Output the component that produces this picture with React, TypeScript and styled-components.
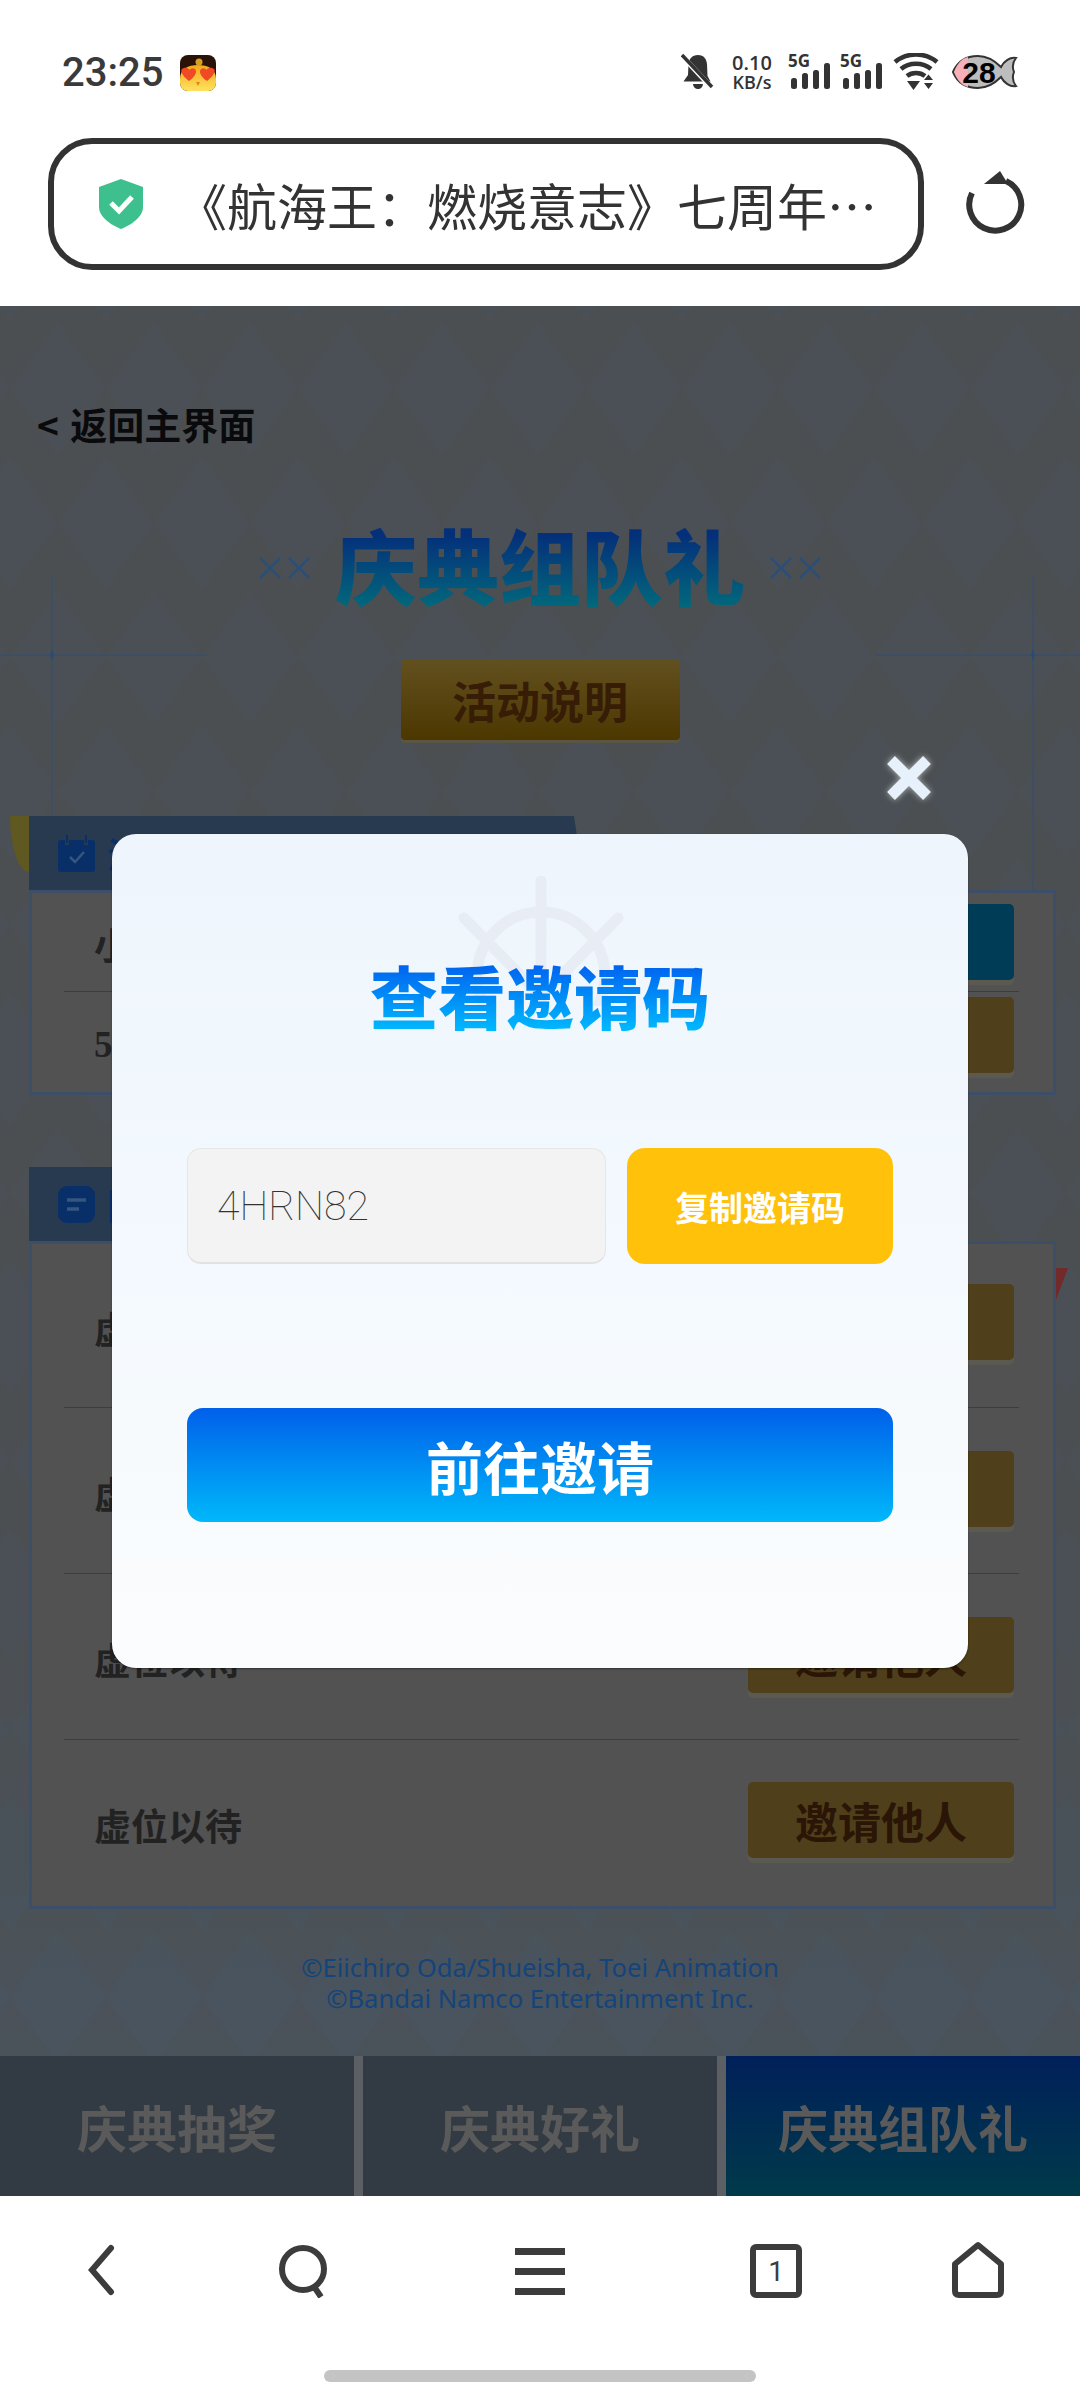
import React from 'react'
import styled, { createGlobalStyle } from 'styled-components'

const serif = `"Liberation Serif", "Noto Sans CJK SC", serif`
const sans = `"Noto Sans CJK SC", "Noto Sans", sans-serif`

const GlobalStyle = createGlobalStyle`
  html, body {
    margin: 0;
    padding: 0;
    background: #fff;
  }
  * {
    box-sizing: border-box;
  }
`

const Screen = styled.div`
  position: relative;
  width: 1080px;
  height: 2400px;
  display: flex;
  flex-direction: column;
  overflow: hidden;
  background: #fff;
  font-family: ${sans};
`

const StatusBar = styled.div`
  height: 106px;
  padding: 52px 62px 0 62px;
  display: flex;
  align-items: flex-start;
  justify-content: space-between;
`

const StatusLeft = styled.div`
  display: flex;
  align-items: center;
  gap: 17px;
`

const Clock = styled.span`
  font-family: Roboto, sans-serif;
  font-size: 40px;
  line-height: 42px;
  font-weight: 500;
  color: #3a3a3a;
`

const StatusRight = styled.div`
  display: flex;
  align-items: center;
  height: 40px;
`

const Speed = styled.div`
  width: 48px;
  margin: 0 12px 0 13px;
  text-align: center;
  font-family: "Open Sans", sans-serif;
  font-size: 18px;
  line-height: 19px;
  font-weight: 600;
  color: #333;
  white-space: nowrap;
`

const SpeedValue = styled.span`
  font-size: 20px;
`

const AddressRow = styled.div`
  height: 200px;
  padding: 32px 54px 0 48px;
  display: flex;
  align-items: flex-start;
  justify-content: space-between;
`

const AddressBar = styled.div`
  width: 876px;
  height: 132px;
  border: 6px solid #333;
  border-radius: 44px;
  padding-left: 43px;
  display: flex;
  align-items: center;
  gap: 44px;
`

const AddressText = styled.span`
  font-size: 50px;
  line-height: 60px;
  color: #333;
  white-space: nowrap;
  margin-left: -12px;
`

const Page = styled.div`
  position: relative;
  flex: 1;
  display: flex;
  flex-direction: column;
  overflow: hidden;
  background: linear-gradient(#4b4f52 0, #4b4f52 1300px, #4a535c 1890px);
`

const Backdrop = styled.svg`
  position: absolute;
  top: 0;
  left: 0;
`

const BackLink = styled.div`
  position: relative;
  margin: 97px 0 0 37px;
  font-size: 37px;
  line-height: 42px;
  font-weight: 700;
  word-spacing: 3px;
  color: #0a0a0c;
`

const TitleRow = styled.div`
  position: relative;
  margin-top: 75px;
  display: flex;
  align-items: center;
  justify-content: center;
  gap: 24px;
`

const Title = styled.h1`
  margin: 0;
  font-family: ${serif};
  font-size: 82px;
  line-height: 104px;
  font-weight: 900;
  background: linear-gradient(#04307a 15%, #02697c 85%);
  -webkit-background-clip: text;
  background-clip: text;
  color: transparent;
`

const ExplainButton = styled.div`
  position: relative;
  align-self: center;
  width: 279px;
  height: 80px;
  margin-top: 36px;
  border-radius: 4px;
  display: flex;
  align-items: center;
  justify-content: center;
  font-family: ${serif};
  font-size: 44px;
  font-weight: 700;
  color: #371c06;
  background: linear-gradient(#62501f, #4c3700);
  box-shadow: 0 3px 0 #5a5643;
`

const Section = styled.section<{ $top: number }>`
  position: relative;
  width: 1027px;
  margin: ${(p) => p.$top}px 0 0 29px;
`

const SectionHeader = styled.div`
  width: 556px;
  height: 74px;
  padding-left: 29px;
  display: flex;
  align-items: center;
  gap: 12px;
  background: #283a4f;
  clip-path: polygon(0 0, 545px 0, 100% 100%, 0 100%);
  font-family: ${serif};
  font-size: 36px;
  font-weight: 700;
  color: #082f68;
`

const SectionPanel = styled.div`
  border: 3px solid #3c4e68;
  background: #525252;
  padding: 0 34px 0 32px;
`

const Row = styled.div<{ $height: number; $last?: boolean }>`
  height: ${(p) => p.$height}px;
  padding: 0 5px 0 30px;
  display: flex;
  align-items: center;
  justify-content: space-between;
  border-bottom: ${(p) => (p.$last ? 'none' : '1px solid #3d3d3d')};
`

const RowLabel = styled.span`
  margin-top: 4px;
  font-family: ${serif};
  font-size: 37px;
  font-weight: 700;
  color: #222;
`

const RowButton = styled.div<{ $color?: string; $lift?: number }>`
  width: 266px;
  height: 76px;
  margin-top: ${(p) => -(p.$lift ?? 4)}px;
  border-radius: 5px;
  display: flex;
  align-items: center;
  justify-content: center;
  font-family: ${serif};
  font-size: 43px;
  font-weight: 700;
  color: #2a1506;
  background: ${(p) => p.$color || '#4f3f1a'};
  box-shadow: 0 5px 0 #5c5950;
`

const Ribbon = styled.div<{ $side: 'left' | 'right' }>`
  position: absolute;
  ${(p) =>
    p.$side === 'left'
      ? `left: -19px; top: 0; width: 19px; height: 56px; background: #5f5820; border-radius: 0 0 0 100%;`
      : `right: -12px; top: 101px; width: 12px; height: 32px; background: #732a2a; clip-path: polygon(0 0, 100% 0, 0 100%);`}
`

const Copyright = styled.div`
  position: relative;
  margin-top: 43px;
  text-align: center;
  font-family: "Noto Sans", sans-serif;
  font-size: 25.600px;
  line-height: 31px;
  color: #14447a;
`

const Tabs = styled.div`
  position: relative;
  margin-top: auto;
  height: 140px;
  display: grid;
  grid-template-columns: 354px 354px 354px;
  column-gap: 9px;
  background: #5c6064;
`

const Tab = styled.div<{ $active?: boolean }>`
  display: flex;
  align-items: center;
  justify-content: center;
  font-family: ${serif};
  font-size: 50px;
  font-weight: 700;
  color: #5a5a5a;
  background: ${(p) => (p.$active ? 'linear-gradient(#00205a, #003a4a)' : '#323a43')};
`

const BottomNav = styled.nav`
  height: 204px;
  padding-top: 48px;
  display: grid;
  grid-template-columns: 204px 200px 272px 200px 204px;
  justify-items: center;
  align-items: start;
  position: relative;
`

const HomeBar = styled.div`
  position: absolute;
  left: 324px;
  bottom: 18px;
  width: 432px;
  height: 12px;
  border-radius: 6px;
  background: #c4c4c4;
`

const ModalLayer = styled.div`
  position: absolute;
  top: 834px;
  left: 112px;
`

const Modal = styled.div`
  position: relative;
  width: 856px;
  height: 834px;
  padding: 129px 75px 0;
  border-radius: 24px;
  background: linear-gradient(#eef5fc, #f3f9fe 50%, #fbfcfd);
  box-shadow: 0 1px 2px rgba(0, 0, 0, 0.4);
`

const CloseButton = styled.svg`
  position: absolute;
  top: -80px;
  right: 35px;
  filter: drop-shadow(0 0 3px rgba(255, 255, 255, 0.6));
`

const Wheel = styled.svg`
  position: absolute;
  top: 42px;
  left: 344px;
`

const ModalTitle = styled.h2`
  position: relative;
  margin: 0;
  text-align: center;
  font-family: ${serif};
  font-size: 68px;
  line-height: 76px;
  font-weight: 900;
  background: linear-gradient(#0060ef, #00c4ff);
  -webkit-background-clip: text;
  background-clip: text;
  color: transparent;
`

const CodeRow = styled.div`
  position: relative;
  margin-top: 109px;
  display: flex;
  justify-content: space-between;
`

const CodeBox = styled.div`
  width: 419px;
  height: 116px;
  padding-left: 29px;
  display: flex;
  align-items: center;
  border-radius: 14px;
  background: #f3f3f3;
  border: 1px solid #e6e6e6;
  border-bottom: 2px solid #e2e2e2;
  font-family: Roboto, sans-serif;
  font-size: 41px;
  font-weight: 100;
  color: #333;
`

const CopyButton = styled.div`
  width: 266px;
  height: 116px;
  border-radius: 18px;
  display: flex;
  align-items: center;
  justify-content: center;
  font-family: ${serif};
  font-size: 34px;
  font-weight: 700;
  color: #fff;
  background: #ffc10a;
`

const GoButton = styled.div`
  position: relative;
  margin-top: 144px;
  height: 114px;
  border-radius: 16px;
  display: flex;
  align-items: center;
  justify-content: center;
  font-family: ${serif};
  font-size: 57px;
  font-weight: 700;
  color: #fff;
  background: linear-gradient(#0060ea, #00b8fa);
`

const AppEmoji = () => (
  <svg width="36" height="36" viewBox="0 0 36 36">
    <defs>
      <linearGradient id="chick" x1="0" y1="0" x2="0" y2="1">
        <stop offset="0" stopColor="#f2a81a" />
        <stop offset="1" stopColor="#ffe35e" />
      </linearGradient>
    </defs>
    <rect width="36" height="36" rx="8" fill="#2b1208" />
    <path d="M0 24 C0 14 8 10 18 10 C28 10 36 14 36 24 V28 A8 8 0 0 1 28 36 H8 A8 8 0 0 1 0 28 Z" fill="url(#chick)" />
    <circle cx="19" cy="7" r="3.500" fill="#d8a020" />
    <path d="M9 26 C1 20 -1 14 4 13 C7 12 9 14 9.500 15 C10 14 12 12 15 14 C18 17 14 23 9 26 Z" fill="#f04a24" />
    <path d="M27 26 C35 20 37 14 32 13 C29 12 27 14 26.500 15 C26 14 24 12 21 14 C18 17 22 23 27 26 Z" fill="#f04a24" />
    <path d="M16 27 L20 27 L18 31 Z" fill="#e8801c" />
  </svg>
)

const BellOff = () => (
  <svg width="34" height="38" viewBox="0 0 34 38">
    <path d="M17 2 C11 2 8 6 7.500 11 L7 22 L2.500 28.500 H29.500 L26.500 23 L26 11 C25.500 6 23 2 17 2 Z" fill="#333" />
    <path d="M12 31 H22 C21.500 35 19 36 17 36 C15 36 12.500 35 12 31 Z" fill="#333" />
    <path d="M1 3 L31 35" stroke="#fff" strokeWidth="5" />
    <path d="M1 2 L31 34" stroke="#333" strokeWidth="3.500" />
  </svg>
)

const Signal = ({ gap }: { gap: number }) => (
  <svg width="42" height="38" viewBox="0 0 42 38" style={{ marginRight: gap }}>
    <text x="0" y="14" fontFamily="Open Sans, sans-serif" fontSize="17" fontWeight="700" fill="#333">
      5G
    </text>
    <rect x="3" y="25" width="6" height="11" rx="2.500" fill="#333" />
    <rect x="14" y="20" width="6" height="16" rx="2.500" fill="#333" />
    <rect x="25" y="17" width="6" height="19" rx="2.500" fill="#333" />
    <rect x="36" y="10" width="6" height="26" rx="2.500" fill="#333" />
  </svg>
)

const Wifi = () => (
  <svg width="46" height="38" viewBox="0 0 46 38" style={{ marginRight: 13 }}>
    <path d="M2 9 C14 -1 32 -1 44 9" fill="none" stroke="#333" strokeWidth="4.500" />
    <path d="M8 16 C16 9 30 9 38 16" fill="none" stroke="#333" strokeWidth="4.500" />
    <path d="M14 23 C19 19 27 19 32 23" fill="none" stroke="#333" strokeWidth="4.500" />
    <path d="M14 28 H27 L20.500 37 Z" fill="#333" />
    <path d="M31 27 L35.500 21.500 L40 27 Z M31 30 H40 L35.500 36 Z" fill="#333" />
  </svg>
)

const FishBattery = () => (
  <svg width="66" height="36" viewBox="0 0 66 36">
    <path d="M1 18 C6 6 16 2 26 2 C36 2 43 7 49 13 C52 7 58 3 64 4 C60 9 60 13 62 18 C60 23 60 27 64 32 C58 33 52 29 49 23 C43 29 36 34 26 34 C16 34 6 30 1 18 Z" fill="#bdbdbd" stroke="#333" strokeWidth="2" />
    <path d="M2 18 C6 7 12 4 16 3 L16 33 C12 32 6 29 2 18 Z" fill="#f7b0b8" />
    <text x="27" y="29" textAnchor="middle" fontFamily="Liberation Sans, sans-serif" fontSize="30" fontWeight="700" fill="#000">
      28
    </text>
  </svg>
)

const ShieldIcon = () => (
  <svg width="48" height="50" viewBox="0 0 48 50">
    <path d="M24 0 L46 8 V28 C46 38 34 46 24 50 C14 46 2 38 2 28 V8 Z" fill="#3dc08e" />
    <path d="M14 24 L22 32 L35 18" fill="none" stroke="#fff" strokeWidth="5" />
  </svg>
)

const ReloadIcon = () => (
  <svg width="60" height="66" viewBox="0 0 60 66" style={{ marginTop: 32 }}>
    <path d="M40 11 A26 26 0 1 1 6 23" fill="none" stroke="#333" strokeWidth="6" />
    <path d="M34 1 L18 14 L42 14 Z" fill="#333" />
  </svg>
)

const Decor = () => (
  <Backdrop width="1080" height="1890" viewBox="0 0 1080 1890">
    <defs>
      <pattern id="diamonds" width="96" height="268" patternUnits="userSpaceOnUse" x="10" y="16">
        <path d="M48 0 L96 67 L48 134 L0 67 Z" fill="#3f6488" />
        <path d="M0 134 L48 201 L0 268 Z M96 134 L96 268 L48 201 Z" fill="#3f6488" />
      </pattern>
    </defs>
    <rect width="1080" height="1590" fill="url(#diamonds)" opacity="0.05" />
    <rect y="1590" width="1080" height="160" fill="url(#diamonds)" opacity="0.1" />
    <g stroke="#3f4e62" strokeWidth="2" fill="none">
      <path d="M52 268 V510 M0 349 H208" />
      <path d="M1033 268 V585 M875 349 H1080" />
    </g>
    <path d="M52 343 L54 349 L52 355 L50 349 Z M1033 343 L1035 349 L1033 355 L1031 349 Z" fill="#2c4a78" />
  </Backdrop>
)

const CrossMark = () => (
  <svg width="53" height="36" viewBox="0 0 53 36" style={{ flexShrink: 0 }}>
    <g stroke="#2b4f78" strokeWidth="2.500" fill="none">
      <path d="M2 4 L22 24 M22 4 L2 24" />
      <path d="M31 4 L51 24 M51 4 L31 24" />
    </g>
  </svg>
)

const CalendarIcon = () => (
  <svg width="37" height="37" viewBox="0 0 37 37">
    <rect x="0" y="5" width="37" height="32" rx="3" fill="#082f68" />
    <path d="M9 0 V10 M28 0 V10" stroke="#283a4f" strokeWidth="4" />
    <path d="M9 0 V8 M28 0 V8" stroke="#082f68" strokeWidth="2" />
    <path d="M12 22 L17 27 L26 17" fill="none" stroke="#35567f" strokeWidth="2.500" />
  </svg>
)

const TaskIcon = () => (
  <svg width="37" height="37" viewBox="0 0 37 37">
    <rect width="37" height="37" rx="9" fill="#082f68" />
    <path d="M9 14 H28 M9 23 H21" stroke="#35567f" strokeWidth="3.500" />
  </svg>
)

const navIcon = { fill: 'none', stroke: '#3c3c3c', strokeWidth: 6 }

const App = () => {
  const waiting = [
    { height: 164, lift: 7 },
    { height: 166, lift: 4 },
    { height: 166, lift: 4 },
    { height: 166, lift: 6 },
  ]
  return (
    <Screen>
      <GlobalStyle />
      <StatusBar>
        <StatusLeft>
          <Clock>23:25</Clock>
          <AppEmoji />
        </StatusLeft>
        <StatusRight>
          <BellOff />
          <Speed>
            <SpeedValue>0.10</SpeedValue>
            <br />
            KB/s
          </Speed>
          <Signal gap={10} />
          <Signal gap={11} />
          <Wifi />
          <FishBattery />
        </StatusRight>
      </StatusBar>

      <AddressRow>
        <AddressBar>
          <ShieldIcon />
          <AddressText>《航海王：燃烧意志》七周年…</AddressText>
        </AddressBar>
        <ReloadIcon />
      </AddressRow>

      <Page>
        <Decor />
        <BackLink>&lt; 返回主界面</BackLink>
        <TitleRow>
          <CrossMark />
          <Title>庆典组队礼</Title>
          <CrossMark />
        </TitleRow>
        <ExplainButton>活动说明</ExplainButton>

        <Section $top={76}>
          <Ribbon $side="left" />
          <SectionHeader>
            <CalendarIcon />活
          </SectionHeader>
          <SectionPanel>
            <Row $height={99}>
              <RowLabel>小</RowLabel>
              <RowButton $color="#003c55" $lift={0} />
            </Row>
            <Row $height={100} $last>
              <RowLabel>5</RowLabel>
              <RowButton $lift={15} />
            </Row>
          </SectionPanel>
        </Section>

        <Section $top={72}>
          <Ribbon $side="right" />
          <SectionHeader>
            <TaskIcon />团
          </SectionHeader>
          <SectionPanel>
            {waiting.map((row, i) => (
              <Row key={i} $height={row.height} $last={i === waiting.length - 1}>
                <RowLabel>虚位以待</RowLabel>
                <RowButton $lift={row.lift}>邀请他人</RowButton>
              </Row>
            ))}
          </SectionPanel>
        </Section>

        <Copyright>
          ©Eiichiro Oda/Shueisha, Toei Animation
          <br />
          ©Bandai Namco Entertainment Inc.
        </Copyright>

        <Tabs>
          <Tab>庆典抽奖</Tab>
          <Tab>庆典好礼</Tab>
          <Tab $active>庆典组队礼</Tab>
        </Tabs>
      </Page>

      <BottomNav>
        <svg width="36" height="52" viewBox="0 0 36 52" {...navIcon}>
          <path d="M27 4 L8 26 L27 48" strokeLinecap="round" />
        </svg>
        <svg width="52" height="54" viewBox="0 0 52 54" {...navIcon}>
          <circle cx="25" cy="25" r="21" />
          <path d="M35 41 L43 53" />
        </svg>
        <svg width="52" height="48" viewBox="0 0 52 48" fill="#3c3c3c" style={{ marginTop: 4 }}>
          <rect x="1" y="0" width="50" height="7" />
          <rect x="1" y="20" width="50" height="7" />
          <rect x="1" y="40" width="50" height="7" />
        </svg>
        <svg width="52" height="54" viewBox="0 0 52 54" {...navIcon}>
          <rect x="3" y="3" width="46" height="48" rx="3" />
          <text x="26" y="37" textAnchor="middle" fontFamily="Roboto, sans-serif" fontSize="28" fill="#3c3c3c" stroke="none">
            1
          </text>
        </svg>
        <svg width="54" height="58" viewBox="0 0 54 58" {...navIcon} style={{ marginTop: -3 }}>
          <path d="M27 4 L50 23 V50 Q50 54 46 54 H8 Q4 54 4 50 V23 Z" strokeLinejoin="round" />
        </svg>
        <HomeBar />
      </BottomNav>

      <ModalLayer>
        <Modal>
          <CloseButton width="48" height="48" viewBox="0 0 48 48">
            <path d="M6 6 L42 42 M42 6 L6 42" stroke="#e6f1fb" strokeWidth="11" />
          </CloseButton>
          <Wheel width="170" height="130" viewBox="0 0 170 130">
            <g fill="none" stroke="#e8edf5" strokeWidth="11" strokeLinecap="round">
              <path d="M85 5 V125" />
              <path d="M8 42 L85 120 M162 42 L85 120" />
              <circle cx="85" cy="100" r="64" />
            </g>
          </Wheel>
          <ModalTitle>查看邀请码</ModalTitle>
          <CodeRow>
            <CodeBox>4HRN82</CodeBox>
            <CopyButton>复制邀请码</CopyButton>
          </CodeRow>
          <GoButton>前往邀请</GoButton>
        </Modal>
      </ModalLayer>
    </Screen>
  )
}

export default App
